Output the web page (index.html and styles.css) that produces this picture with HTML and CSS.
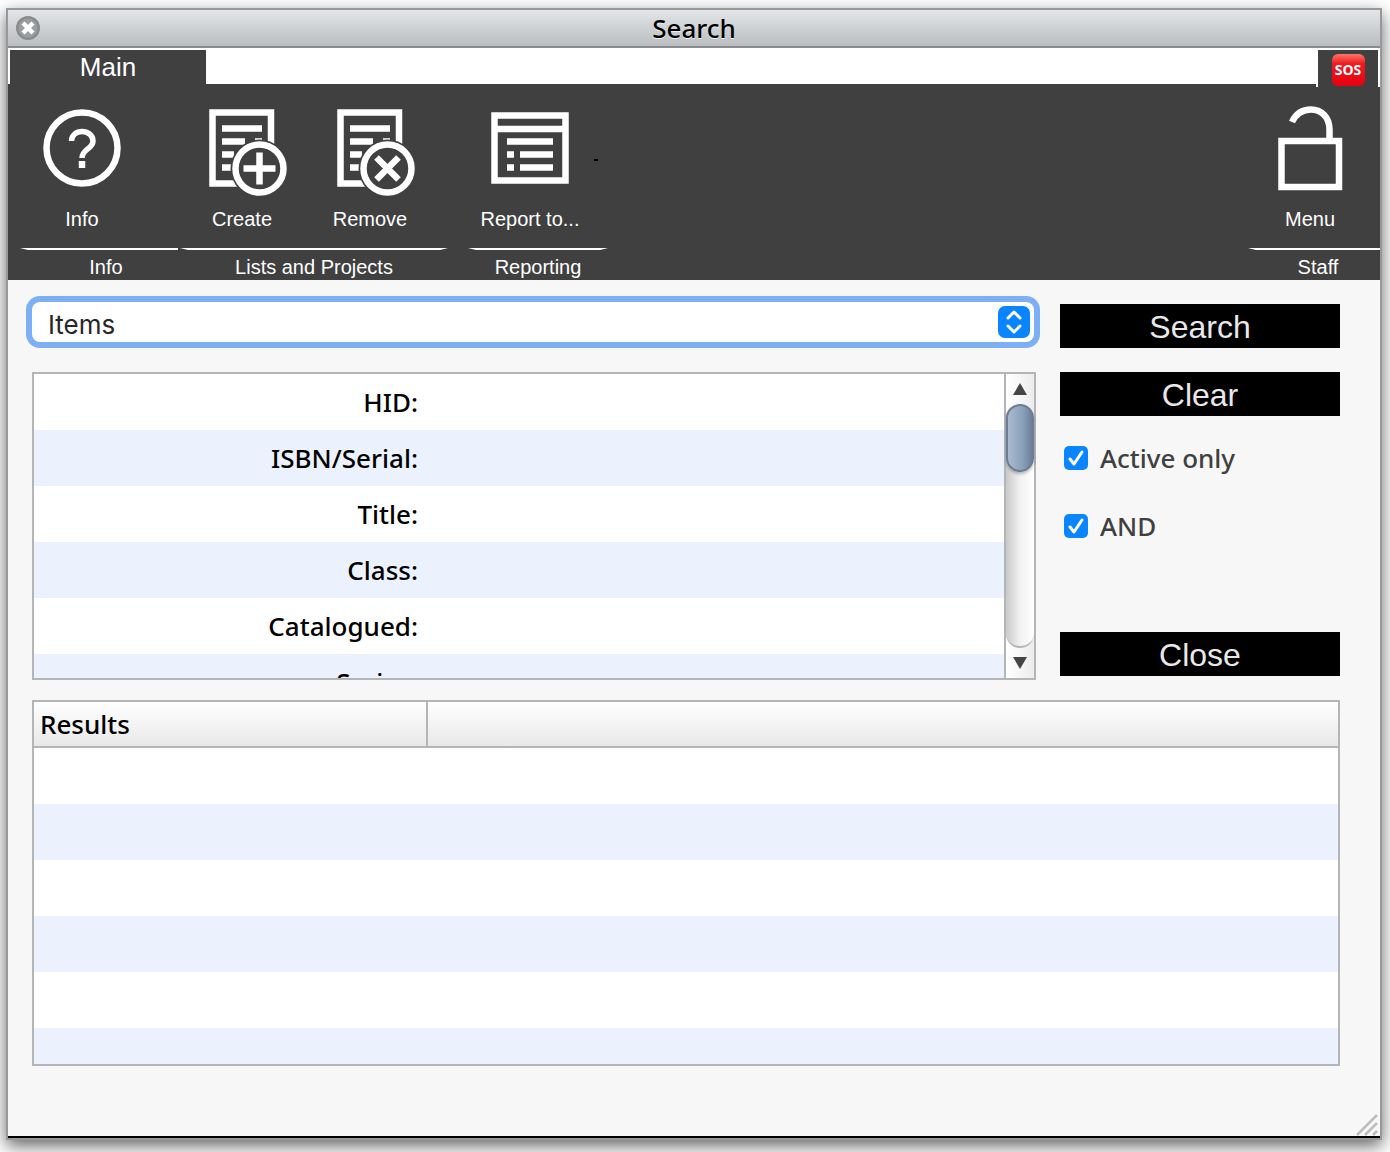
FILE: index.html
```html
<!DOCTYPE html>
<html lang="en">
<head>
<meta charset="utf-8">
<title>Search</title>
<link rel="stylesheet" href="styles.css">
</head>
<body>
<main class="window">
  <header class="titlebar">
    <button class="window-close" aria-label="Close window">
      <svg width="24" height="24" viewBox="0 0 24 24"><circle cx="12" cy="12" r="12" fill="#898b8d"/><circle cx="12" cy="12" r="9.500" fill="#9b9da0"/><path d="M7 7l10 10M17 7l-10 10" stroke="#fff" stroke-width="4.500"/></svg>
    </button>
    <h1 class="title">Search</h1>
  </header>

  <nav class="tabs">
    <button class="tab">Main</button>
    <button class="sos-tab"><span class="sos">SOS</span></button>
  </nav>

  <section class="ribbon">
    <div class="group group-info">
      <div class="tools">
        <button class="tool">
          <svg class="icon" viewBox="0 0 96 96"><circle cx="48" cy="48" r="35.500"/><path d="M37.500 41c0-6 5-9.500 10.500-9.500s11 3.500 11 9.500c0 8-11 8-11 17" stroke-width="5.500"/><path d="M48 61v7"/></svg>
          <span>Info</span>
        </button>
      </div>
      <div class="group-name">Info</div>
    </div>
    <div class="group group-lists">
      <div class="tools">
        <button class="tool">
          <svg class="icon" viewBox="0 0 96 96"><rect x="18.500" y="12.500" width="58.500" height="71"/><path d="M28 28.500h40M28 41.500h23M61 41.500h7M28 54.500h12M28 67.500h12"/><circle class="disc" cx="65.500" cy="68.500" r="29"/><circle cx="65.500" cy="68.500" r="24"/><path d="M49.500 68.500h32M65.500 52.500v32"/></svg>
          <span>Create</span>
        </button>
        <button class="tool">
          <svg class="icon" viewBox="0 0 96 96"><rect x="18.500" y="12.500" width="58.500" height="71"/><path d="M28 28.500h40M28 41.500h23M61 41.500h7M28 54.500h12M28 67.500h12"/><circle class="disc" cx="65.500" cy="68.500" r="29"/><circle cx="65.500" cy="68.500" r="24"/><path d="M54.500 57.500l22 22M76.500 57.500l-22 22"/></svg>
          <span>Remove</span>
        </button>
      </div>
      <div class="group-name">Lists and Projects</div>
    </div>
    <div class="group group-report">
      <div class="tools">
        <button class="tool">
          <svg class="icon" viewBox="0 0 96 96"><rect x="12.500" y="15.500" width="71" height="65"/><path d="M12 29h72M25 41.500h46M25 54.500h7M38 54.500h33M25 67.500h7M38 67.500h33"/></svg>
          <span>Report to...</span>
        </button>
        <span class="dash"></span>
      </div>
      <div class="group-name">Reporting</div>
    </div>
    <div class="group group-staff">
      <div class="tools">
        <button class="tool">
          <svg class="icon" viewBox="0 0 96 96"><rect x="19.500" y="41" width="57.500" height="46"/><path d="M67.500 41V29.500C67.500 17 59 9.500 49 9.500C39.500 9.500 33.500 14.500 30 22"/></svg>
          <span>Menu</span>
        </button>
      </div>
      <div class="group-name">Staff</div>
    </div>
  </section>

  <form class="content">
    <div class="query">
      <div class="criteria">
        <div class="picker">
          <select class="picker-select" aria-label="Search in"><option>Items</option></select>
          <svg class="picker-arrows" viewBox="0 0 32 32"><rect width="32" height="32" rx="7" fill="#0a84ff"/><path d="M10 12l6-6 6 6M10 20l6 6 6-6" fill="none" stroke="#fff" stroke-width="3" stroke-linecap="round" stroke-linejoin="round"/></svg>
        </div>
        <div class="fields">
          <div class="field-list">
            <div class="field"><label for="hid">HID:</label><input id="hid" type="text"></div>
            <div class="field"><label for="isbn">ISBN/Serial:</label><input id="isbn" type="text"></div>
            <div class="field"><label for="title">Title:</label><input id="title" type="text"></div>
            <div class="field"><label for="class">Class:</label><input id="class" type="text"></div>
            <div class="field"><label for="catalogued">Catalogued:</label><input id="catalogued" type="text"></div>
            <div class="field"><label for="series">Series:</label><input id="series" type="text"></div>
          </div>
          <div class="scrollbar">
            <button type="button" class="scroll-step" aria-label="Scroll up"><svg width="14" height="12" viewBox="0 0 14 12"><path d="M7 0l7 12H0z" fill="#444"/></svg></button>
            <div class="scroll-track"><div class="scroll-thumb"></div></div>
            <button type="button" class="scroll-step" aria-label="Scroll down"><svg width="14" height="12" viewBox="0 0 14 12"><path d="M7 12l7-12H0z" fill="#444"/></svg></button>
          </div>
        </div>
      </div>
      <div class="actions">
        <button type="button" class="action">Search</button>
        <button type="button" class="action">Clear</button>
        <div class="checks">
          <label class="check"><input type="checkbox" checked>Active only</label>
          <label class="check"><input type="checkbox" checked>AND</label>
        </div>
        <button type="button" class="action action-close">Close</button>
      </div>
    </div>

    <div class="results">
      <table class="results-table">
        <thead><tr><th class="results-name">Results</th><th></th></tr></thead>
        <tbody>
          <tr><td></td><td></td></tr>
          <tr><td></td><td></td></tr>
          <tr><td></td><td></td></tr>
          <tr><td></td><td></td></tr>
          <tr><td></td><td></td></tr>
          <tr><td></td><td></td></tr>
        </tbody>
      </table>
    </div>
  </form>
  <svg class="grip" viewBox="0 0 22 22"><path d="M1 21L21 1M9 21L21 9M17 21l4-4" stroke="#bdbdbd" stroke-width="2.500"/></svg>
</main>
</body>
</html>
```
FILE: styles.css
```css
* { box-sizing: border-box; }

body {
  margin: 0;
  padding: 8px 8px 12px 6px;
  background: #fff;
  color: #000;
  font: 500 26px/36px "Noto Sans", sans-serif;
}

button {
  margin: 0;
  padding: 0;
  border: 0;
  background: none;
  color: inherit;
  font: inherit;
}

svg { display: block; }

.window {
  position: relative;
  min-height: calc(100vh - 20px);
  border: 2px solid #969899;
  background: #f7f7f7;
  box-shadow: inset 0 -2px #000, 0 6px 16px rgba(0, 0, 0, 0.6);
}

/* Title bar */
.titlebar {
  display: grid;
  grid-template-columns: 24px 1fr 24px;
  align-items: center;
  height: 38px;
  padding: 0 8px;
  border-bottom: 2px solid #898c8f;
  background: linear-gradient(#e3e6e8, #b9bdc0);
}

.title {
  margin: 0;
  font-size: 26px;
  font-weight: 500;
  line-height: 36px;
  text-align: center;
  text-shadow: 0 1px #eee;
}

/* Tabs */
.tabs {
  display: flex;
  justify-content: space-between;
  height: 36px;
  padding: 2px 0 0 2px;
  background: #fff;
  color: #fff;
  font-family: "Liberation Sans", Arial, sans-serif;
}

.tab {
  width: 196px;
  background: #404040;
  line-height: 34px;
}

.sos-tab {
  display: flex;
  justify-content: center;
  width: 64px;
  height: 37px;
  padding-top: 4px;
  border: solid #fff;
  border-width: 0 2px;
  background: #404040;
}

.sos {
  width: 33px;
  height: 32px;
  border-radius: 6px;
  background: linear-gradient(#ff7468, #ee1c20 30%, #e6000f);
  font: 700 14px/32px "Open Sans", sans-serif;
  text-align: center;
}

/* Ribbon */
.ribbon {
  display: flex;
  height: 196px;
  padding: 16px 0 0 12px;
  background: #404040;
  color: #fff;
  font: 20px/24px "Liberation Sans", Arial, sans-serif;
}

.tools {
  display: flex;
  gap: 4px;
  height: 148px;
}

.tool {
  display: flex;
  flex: none;
  flex-direction: column;
  align-items: center;
  gap: 11px;
  width: 124px;
}

.icon {
  width: 96px;
  height: 96px;
  fill: none;
  stroke: #fff;
  stroke-width: 6.5;
}

.icon .disc {
  fill: #404040;
  stroke: none;
}

.group-name {
  padding-top: 6px;
  line-height: 26px;
  text-align: center;
}

.group-name::before {
  content: "";
  display: block;
  height: 2px;
  margin-top: -6px;
  margin-bottom: 4px;
  background: #fff;
  clip-path: polygon(0 0, 100% 0, calc(100% - 8px) 100%, 8px 100%);
}

.group-info {
  width: 158px;
  margin-right: 2px;
}

.group-info .group-name { text-indent: 14px; }
.group-lists { width: 268px; }
.group-report { width: 140px; margin-left: 20px; }
.group-staff { width: 132px; margin-left: auto; }
.group-staff .group-name { text-indent: 8px; }

.group-info .group-name::before,
.group-staff .group-name::before {
  clip-path: polygon(0 0, 100% 0, 100% 100%, 8px 100%);
}

/* The indent has to reach the text after the rule, which is a block of its own. */
.group-info .group-name { padding-left: 0; }
.group-info .group-name,
.group-staff .group-name {
  display: grid;
  justify-content: stretch;
}

.dash {
  flex: none;
  width: 4px;
  height: 2px;
  margin-top: 59px;
  margin-left: -2px;
  background: #000;
}

/* Search form */
.content { padding: 22px 40px 72px 24px; }

.query {
  display: grid;
  grid-template-columns: 1fr 280px;
  gap: 24px;
}

.criteria {
  display: flex;
  flex-direction: column;
  gap: 30px;
}

.picker {
  position: relative;
  margin-right: 2px;
}

.picker-select {
  display: block;
  width: 100%;
  height: 40px;
  padding: 6px 16px 0;
  border: 0;
  border-radius: 8px;
  outline: 0;
  appearance: none;
  background: #fff;
  box-shadow: 0 0 0 6px #7caff3;
  color: #262626;
  font: 26px/34px Inter, sans-serif;
}

.picker-arrows {
  position: absolute;
  top: 4px;
  right: 4px;
  width: 32px;
  height: 32px;
  pointer-events: none;
}

.fields {
  display: flex;
  height: 308px;
  border: 2px solid #b3b5b7;
  background: #fff;
}

.field-list {
  flex: 1;
  overflow: hidden;
}

.field {
  display: grid;
  grid-template-columns: 384px 1fr;
  align-items: center;
  height: 56px;
}

.field:nth-child(even) { background: #ebf2fd; }
.field label { text-align: right; }

.field input {
  min-width: 0;
  height: 40px;
  padding: 0 12px;
  border: 0;
  background: none;
  font: inherit;
}

.scrollbar {
  display: flex;
  flex-direction: column;
  width: 30px;
  border-left: 2px solid #b3b5b7;
  background: linear-gradient(90deg, #fff, #ececec);
}

.scroll-step {
  display: grid;
  place-items: center;
  height: 30px;
}

.scroll-track {
  flex: 1;
  border-bottom: 2px solid #b3b5b7;
  border-radius: 14px;
  background: linear-gradient(90deg, #c9c9c9, #f1f1f1 50%, #fff);
}

.scroll-thumb {
  height: 68px;
  border: 2px solid #6b7d94;
  border-radius: 14px;
  background: linear-gradient(90deg, #a9bbd0, #8ba0b9 60%, #6b8098);
  box-shadow: 0 2px 3px rgba(0, 0, 0, 0.25);
}

.actions {
  display: flex;
  flex-direction: column;
  gap: 24px;
  padding: 2px 0 4px;
}

.action {
  height: 44px;
  padding-top: 2px;
  background: #000;
  color: #e8e8e8;
  font: 32px/42px "Liberation Sans", Arial, sans-serif;
}

.action-close { margin-top: auto; }

.checks {
  display: flex;
  flex-direction: column;
  gap: 32px;
  padding-left: 4px;
  color: #404040;
}

.check {
  display: flex;
  align-items: center;
  gap: 12px;
}

.check input {
  width: 24px;
  height: 24px;
  margin: 0;
  border-radius: 5px;
  appearance: none;
  background: #0a84ff url("data:image/svg+xml,%3Csvg xmlns='http://www.w3.org/2000/svg' viewBox='0 0 24 24'%3E%3Cpath d='M6 13l4 5 8-12' fill='none' stroke='white' stroke-width='3' stroke-linecap='round' stroke-linejoin='round'/%3E%3C/svg%3E");
}

.check input:not(:checked) { background: #fff; }

/* Results */
.results {
  height: 366px;
  margin-top: 20px;
  overflow: hidden;
  border: 2px solid #b3b5b7;
}

.results-table {
  width: 100%;
  border-spacing: 0;
  table-layout: fixed;
  background: #fff;
}

.results-table th {
  height: 46px;
  padding: 0 6px;
  border-bottom: 2px solid #b3b5b7;
  background: linear-gradient(#fff, #e8e8e8);
  font-weight: 500;
  text-align: left;
}

.results-table .results-name {
  width: 394px;
  border-right: 2px solid #b3b5b7;
}

.results-table td {
  height: 56px;
  padding: 0;
}

.results-table tbody tr:nth-child(even) { background: #ebf2fd; }

.grip {
  position: absolute;
  right: 2px;
  bottom: 2px;
  width: 22px;
  height: 22px;
}
```
